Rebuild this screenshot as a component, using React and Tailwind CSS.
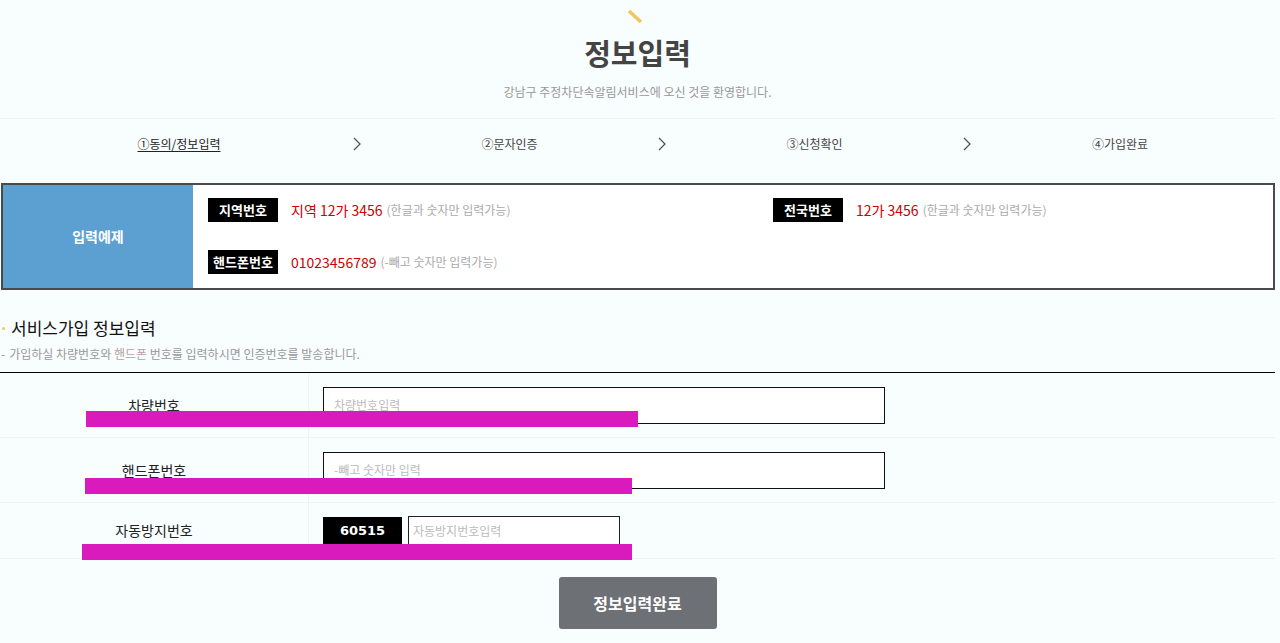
const font = { fontFamily: '"Noto Sans CJK KR", "Noto Sans", sans-serif' };

const Chevron = () => (
  <svg width="8" height="14" viewBox="0 0 8 14" className="shrink-0">
    <path d="M1 1 L7 7 L1 13" fill="none" stroke="#555" strokeWidth="1.3" />
  </svg>
);

const Label = ({ children }) => (
  <span className="inline-flex items-center justify-center w-[70px] h-[24px] bg-black text-white text-[13px] font-bold shrink-0">
    {children}
  </span>
);

const Example = ({ label, value, note }) => (
  <div className="flex items-center">
    <Label>{label}</Label>
    <span className="ml-[13px] text-[14px] text-[#cc0000]">{value}</span>
    <span className="ml-[4px] text-[12px] text-[#aaaaaa]">{note}</span>
  </div>
);

const FormRow = ({ label, height, children }) => (
  <div className={`flex border-b border-[#eef3f3] ${height}`}>
    <div className="w-[309px] shrink-0 flex items-center justify-center border-r border-[#eef3f3] text-[14px] text-[#222]">
      {label}
    </div>
    <div className="flex items-center pl-[14px]">{children}</div>
  </div>
);

export default function App() {
  const steps = ['①동의/정보입력', '②문자인증', '③신청확인', '④가입완료'];

  return (
    <div className="w-[1280px] h-[643px] overflow-hidden bg-[#f8fdfd]" style={font}>
      <div className="w-[1275px]">
        {/* heading */}
        <div className="flex flex-col items-center pt-[9px] pb-[18px] border-b border-[#eef4f4]">
          <svg width="16" height="14" viewBox="0 0 16 14" className="ml-[-6px]">
            <line x1="2" y1="2" x2="14" y2="13" stroke="#f0c75a" strokeWidth="3.5" />
          </svg>
          <h1 className="mt-[9px] h-[40px] leading-[40px] text-[29px] font-bold text-[#444]">정보입력</h1>
          <p className="mt-[12px] leading-[16px] text-[12px] text-[#999]">
            강남구 주정차단속알림서비스에 오신 것을 환영합니다.
          </p>
        </div>

        {/* steps */}
        <div className="flex items-center h-[49px] text-[12px] text-[#444]">
          <div className="w-[353px] pl-[5px] text-center">
            <span className="underline underline-offset-2 text-[#222]">{steps[0]}</span>
          </div>
          <Chevron />
          <div className="w-[297px] text-center">{steps[1]}</div>
          <Chevron />
          <div className="w-[297px] text-center">{steps[2]}</div>
          <Chevron />
          <div className="w-[298px] text-center">{steps[3]}</div>
        </div>

        {/* example box */}
        <div className="mt-[15px] ml-[1px] flex h-[107px] border-2 border-[#4a4a4a]">
          <div className="w-[190px] shrink-0 bg-[#5ca0d2] flex items-center justify-center text-white text-[14px] font-bold">
            입력예제
          </div>
          <div className="flex-1 bg-white pl-[15px] pt-[13px]">
            <div className="flex">
              <div className="w-[565px]">
                <Example label="지역번호" value="지역 12가 3456" note="(한글과 숫자만 입력가능)" />
              </div>
              <Example label="전국번호" value="12가 3456" note="(한글과 숫자만 입력가능)" />
            </div>
            <div className="mt-[28px]">
              <Example label="핸드폰번호" value="01023456789" note="(-빼고 숫자만 입력가능)" />
            </div>
          </div>
        </div>

        {/* section title */}
        <div className="mt-[28px] flex items-center leading-[20px]">
          <span className="ml-[2px] w-[3px] h-[3px] rounded-full bg-[#f0c75a]" />
          <h2 className="ml-[6px] text-[17px] text-[#111]">서비스가입 정보입력</h2>
        </div>
        <p className="mt-[8px] leading-[16px] text-[12px] text-[#999]">
          <span className="ml-[1px] mr-[4px]">-</span>
          가입하실 차량번호와 <span className="text-[#b8a2a2]">핸드폰</span> 번호를 입력하시면 인증번호를 발송합니다.
        </p>

        {/* form */}
        <div className="mt-[10px] border-t border-black relative">
          <FormRow label="차량번호" height="h-[65px]">
            <div className="w-[562px] h-[37px] border border-[#111] bg-white flex items-center pl-[10px] text-[12px] text-[#bbb]">
              차량번호입력
            </div>
          </FormRow>
          <FormRow label="핸드폰번호" height="h-[65px]">
            <div className="w-[562px] h-[37px] border border-[#111] bg-white flex items-center pl-[10px] text-[12px] text-[#bbb]">
              -빼고 숫자만 입력
            </div>
          </FormRow>
          <FormRow label="자동방지번호" height="h-[56px]">
            <div className="w-[79px] h-[28px] bg-black flex items-center justify-center text-white text-[13px] font-bold" style={{ fontFamily: '"DejaVu Sans", sans-serif' }}>
              60515
            </div>
            <div className="ml-[6px] w-[212px] h-[29px] border border-[#222] bg-white flex items-center pl-[4px] text-[12px] text-[#bbb]">
              자동방지번호입력
            </div>
          </FormRow>

          <div className="absolute left-[86px] top-[38px] w-[552px] h-[16px] bg-[#d91bbd]" />
          <div className="absolute left-[85px] top-[105px] w-[547px] h-[16px] bg-[#d91bbd]" />
          <div className="absolute left-[82px] top-[171px] w-[550px] h-[16px] bg-[#d91bbd]" />
        </div>

        <div className="mt-[18px] flex justify-center">
          <button className="w-[158px] h-[52px] rounded-[3px] bg-[#6d7075] text-white text-[16px] font-bold">
            정보입력완료
          </button>
        </div>
      </div>
    </div>
  );
}
